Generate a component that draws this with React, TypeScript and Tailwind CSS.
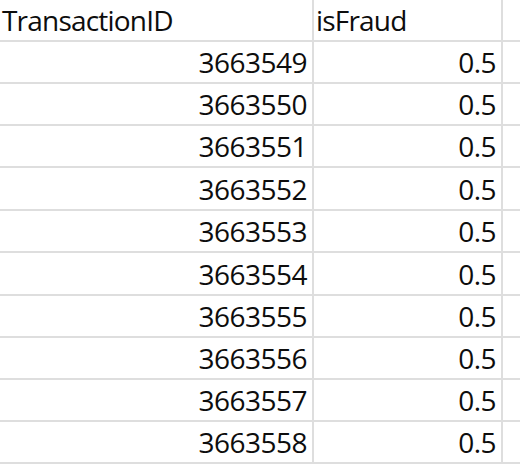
const rows: [string, string, number][] = [
  ["3663549", "0.5", 42],
  ["3663550", "0.5", 42],
  ["3663551", "0.5", 42],
  ["3663552", "0.5", 43],
  ["3663553", "0.5", 42],
  ["3663554", "0.5", 43],
  ["3663555", "0.5", 42],
  ["3663556", "0.5", 42],
  ["3663557", "0.5", 42],
  ["3663558", "0.5", 42],
];

export default function App() {
  return (
    <div
      className="w-[520px] h-[470px] overflow-hidden bg-white text-[28px] text-[#0d0d0d] leading-none tracking-[-0.5px]"
      style={{ fontFamily: '"Open Sans", "Noto Sans", sans-serif' }}
    >
      {/* header row */}
      <div className="flex h-[42px] border-b-2 border-[#dedede] tracking-[-0.8px]">
        <div className="w-[314px] shrink-0 border-r-2 border-[#dedede] flex items-end pl-[2px] pb-[6px]">
          TransactionID
        </div>
        <div className="w-[189px] shrink-0 border-r-2 border-[#dedede] flex items-end pl-[2px] pb-[6px]">
          isFraud
        </div>
        <div className="flex-1" />
      </div>

      {rows.map(([id, v, h]) => (
        <div
          key={id}
          className={`flex border-b-2 border-[#dedede] ${h === 43 ? "h-[43px]" : "h-[42px]"}`}
        >
          <div className="w-[314px] shrink-0 border-r-2 border-[#dedede] flex items-end justify-end pr-[5px] pb-[6px]">
            {id}
          </div>
          <div className="w-[189px] shrink-0 border-r-2 border-[#dedede] flex items-end justify-end pr-[5px] pb-[6px]">
            {v}
          </div>
          <div className="flex-1" />
        </div>
      ))}
    </div>
  );
}
